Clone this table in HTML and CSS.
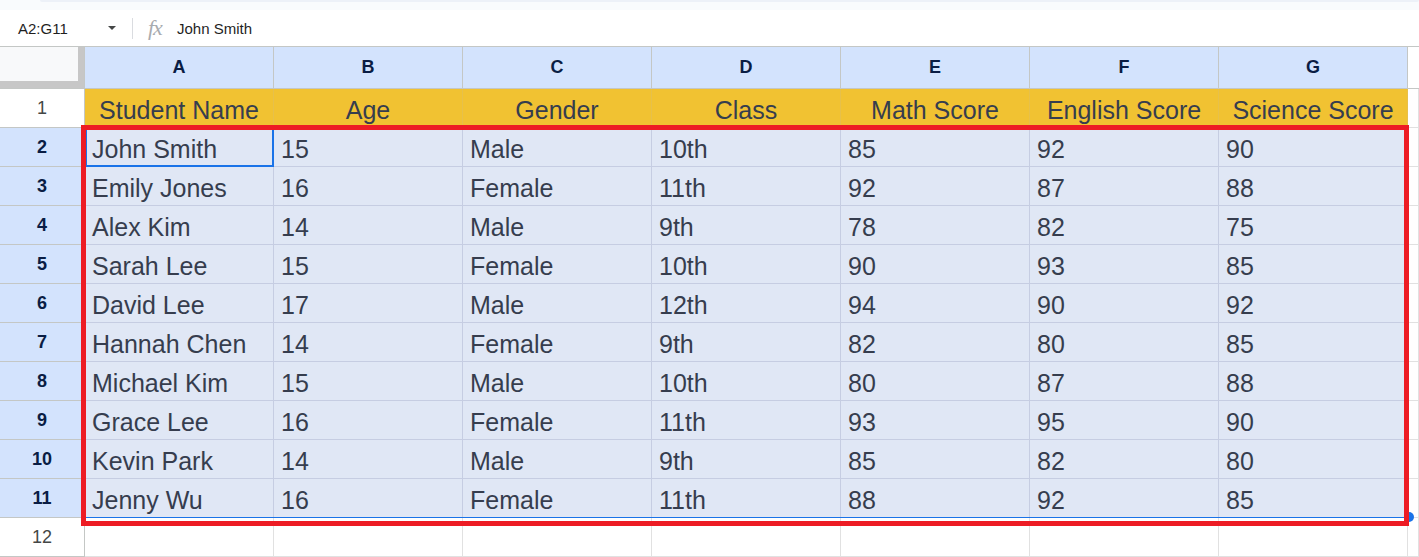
FILE: index.html
```html
<!DOCTYPE html>
<html>
<head>
<meta charset="utf-8">
<link rel="stylesheet" href="styles.css">
</head>
<body>
<div class="topstrip"><div class="toolbar-edge"></div></div>
<div class="fbar">
  <span class="namebox">A2:G11</span>
  <span class="caret"></span>
  <span class="sep"></span>
  <span class="fx">fx</span>
  <span class="fcontent">John Smith</span>
</div>
<div class="sheet">
  <div class="corner"></div>
  <div class="colh">A</div><div class="colh">B</div><div class="colh">C</div><div class="colh">D</div><div class="colh">E</div><div class="colh">F</div><div class="colh">G</div><div class="colh blank"></div>

  <div class="rowh plain">1</div>
  <div class="hc">Student Name</div><div class="hc">Age</div><div class="hc">Gender</div><div class="hc">Class</div><div class="hc">Math Score</div><div class="hc">English Score</div><div class="hc">Science Score</div><div class="ec"></div>

  <div class="rowh">2</div>
  <div class="dc">John Smith</div><div class="dc">15</div><div class="dc">Male</div><div class="dc">10th</div><div class="dc">85</div><div class="dc">92</div><div class="dc">90</div><div class="ec"></div>

  <div class="rowh">3</div>
  <div class="dc">Emily Jones</div><div class="dc">16</div><div class="dc">Female</div><div class="dc">11th</div><div class="dc">92</div><div class="dc">87</div><div class="dc">88</div><div class="ec"></div>

  <div class="rowh">4</div>
  <div class="dc">Alex Kim</div><div class="dc">14</div><div class="dc">Male</div><div class="dc">9th</div><div class="dc">78</div><div class="dc">82</div><div class="dc">75</div><div class="ec"></div>

  <div class="rowh">5</div>
  <div class="dc">Sarah Lee</div><div class="dc">15</div><div class="dc">Female</div><div class="dc">10th</div><div class="dc">90</div><div class="dc">93</div><div class="dc">85</div><div class="ec"></div>

  <div class="rowh">6</div>
  <div class="dc">David Lee</div><div class="dc">17</div><div class="dc">Male</div><div class="dc">12th</div><div class="dc">94</div><div class="dc">90</div><div class="dc">92</div><div class="ec"></div>

  <div class="rowh">7</div>
  <div class="dc">Hannah Chen</div><div class="dc">14</div><div class="dc">Female</div><div class="dc">9th</div><div class="dc">82</div><div class="dc">80</div><div class="dc">85</div><div class="ec"></div>

  <div class="rowh">8</div>
  <div class="dc">Michael Kim</div><div class="dc">15</div><div class="dc">Male</div><div class="dc">10th</div><div class="dc">80</div><div class="dc">87</div><div class="dc">88</div><div class="ec"></div>

  <div class="rowh">9</div>
  <div class="dc">Grace Lee</div><div class="dc">16</div><div class="dc">Female</div><div class="dc">11th</div><div class="dc">93</div><div class="dc">95</div><div class="dc">90</div><div class="ec"></div>

  <div class="rowh">10</div>
  <div class="dc">Kevin Park</div><div class="dc">14</div><div class="dc">Male</div><div class="dc">9th</div><div class="dc">85</div><div class="dc">82</div><div class="dc">80</div><div class="ec"></div>

  <div class="rowh">11</div>
  <div class="dc">Jenny Wu</div><div class="dc">16</div><div class="dc">Female</div><div class="dc">11th</div><div class="dc">88</div><div class="dc">92</div><div class="dc">85</div><div class="ec"></div>

  <div class="rowh plain">12</div>
  <div class="ec"></div><div class="ec"></div><div class="ec"></div><div class="ec"></div><div class="ec"></div><div class="ec"></div><div class="ec"></div><div class="ec"></div>

  <div class="range"></div>
  <div class="active"></div>
  <div class="handle"></div>
  <div class="annot"></div>
</div>
</body>
</html>
```

FILE: styles.css
```css
* { box-sizing: border-box; }
html, body { margin: 0; padding: 0; background: #ffffff; overflow: hidden; }
body { font-family: "Liberation Sans", Arial, sans-serif; width: 1419px; height: 557px; }

.topstrip { height: 10px; background: #f9fbfd; position: relative; }
.toolbar-edge { margin-left: 40px; height: 2px; background: #edf1f8; border-radius: 0 0 4px 4px; }

.fbar { height: 37px; display: flex; align-items: center; border-bottom: 1px solid #c4c7c5; background: #fff; }
.namebox { width: 108px; padding-left: 18px; font-size: 15px; color: #1f1f1f; }
.caret { width: 0; height: 0; border-left: 4px solid transparent; border-right: 4px solid transparent; border-top: 4px solid #444746; }
.sep { width: 1px; height: 21px; background: #dadce0; margin-left: 16px; }
.fx { margin-left: 15px; width: 20px; font-family: "Liberation Serif", "Times New Roman", serif; font-style: italic; font-size: 22px; color: #a8abaf; line-height: 1; letter-spacing: -1px; }
.fcontent { margin-left: 9px; font-size: 15px; color: #1f1f1f; }

.sheet { position: relative; display: grid; grid-template-columns: 85px repeat(7, 189px) 1fr; grid-template-rows: 42px repeat(12, 39px); }

.corner { background: #f8f9fa; border-right: 1px solid #c4c7c5; border-bottom: 1px solid #c4c7c5; box-shadow: inset -6px -7px 0 #c7c7c7; }

.colh { background: #d3e3fd; border-right: 1px solid #c4c7c5; border-bottom: 1px solid #c4c7c5; display: flex; align-items: center; justify-content: center; font-weight: bold; font-size: 18px; color: #0a1d44; }
.colh.blank { background: #fff; border-right: none; }

.rowh { background: #d3e3fd; border-right: 1px solid #c4c7c5; border-bottom: 1px solid #c4c7c5; display: flex; align-items: center; justify-content: center; font-weight: bold; font-size: 18px; color: #0a1d44; }
.rowh.plain { background: #fff; font-weight: normal; color: #444746; }

.hc { background: #f1c232; border-right: 1px solid #e7c04a; border-bottom: 1px solid #dfb42c; display: flex; align-items: flex-end; justify-content: center; font-size: 25px; line-height: 28px; padding-bottom: 3px; color: #363d4e; white-space: nowrap; }

.dc { background: #e0e7f5; border-right: 1px solid #c6cde2; border-bottom: 1px solid #c6cde2; display: flex; align-items: flex-end; padding: 0 0 3px 7px; font-size: 25px; line-height: 28px; color: #363d4e; white-space: nowrap; }

.ec { background: #fff; border-right: 1px solid #e1e1e1; border-bottom: 1px solid #e1e1e1; }

.range { position: absolute; left: 84px; top: 80px; width: 1325px; height: 391px; border: 1px solid #1a73e8; pointer-events: none; }
.active { position: absolute; left: 85px; top: 80px; width: 189px; height: 40px; border: 2px solid #1a73e8; }
.handle { position: absolute; left: 1404px; top: 465px; width: 10px; height: 10px; border-radius: 50%; background: #1a73e8; }
.annot { position: absolute; left: 81px; top: 78px; width: 1328px; height: 401px; border: 5px solid #ed1c24; }
```
